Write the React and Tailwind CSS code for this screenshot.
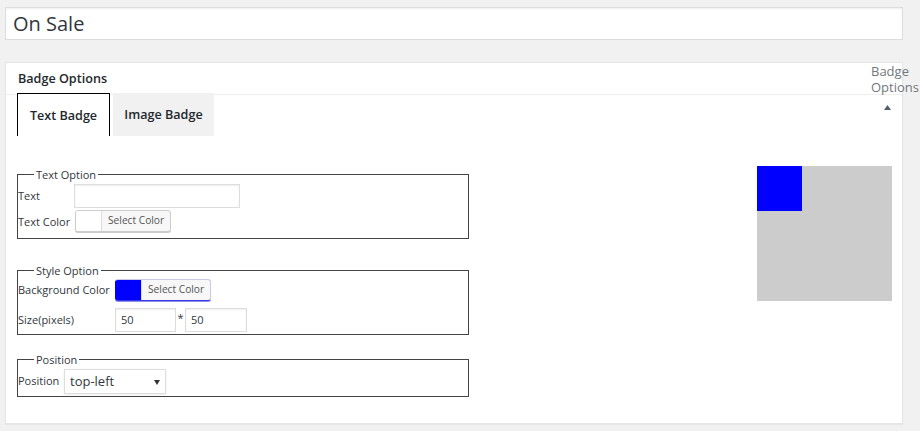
import React from "react";

function ColorButton({ focused }) {
  return (
    <div
      className={
        "flex h-[22px] rounded-[3px] border bg-[#f7f7f7] overflow-hidden " +
        (focused
          ? "border-[#c9c9e8] border-l-0 border-b-[#3a3ae6] shadow-[0_1px_0_#8d8df0]"
          : "border-[#cccccc] shadow-[0_1px_0_#cccccc]")
      }
    >
      <span
        className={
          focused
            ? "w-[27px] h-full bg-[#0000ff] border-r border-[#dddddd]"
            : "w-[26px] h-full bg-white border-r border-[#dddddd]"
        }
      />
      <span className="flex items-center whitespace-nowrap px-[6px] text-[10.2px] text-[#555555]">
        Select Color
      </span>
    </div>
  );
}

function Input({ w, value }) {
  return (
    <div
      className={
        "h-[24px] border border-[#dddddd] bg-white shadow-[inset_0_1px_2px_rgba(0,0,0,0.07)] flex items-center pl-[5px] text-[11px] text-[#32373c] " +
        w
      }
    >
      {value}
    </div>
  );
}

export default function App() {
  return (
    <div className="w-[920px] h-[431px] bg-[#f1f1f1] overflow-hidden pt-[7px] pl-[5px] font-['Open_Sans','Noto_Sans',sans-serif] text-[#32373c]">
      <div className="w-[898px] h-[33px] border border-[#dddddd] bg-white flex items-center pl-[7px] text-[20px] text-[#32373c] shadow-[inset_0_1px_2px_rgba(0,0,0,0.07)]">
        On Sale
      </div>

      <div className="relative mt-[22px] w-[898px] h-[362px] border border-[#e5e5e5] bg-white shadow-[0_1px_1px_rgba(0,0,0,0.04)]">
        <div className="h-[32px] pt-[2px] border-b border-[#eeeeee] flex items-center pl-[12px] text-[12.6px] font-semibold text-[#23282d]">
          Badge Options
        </div>
        <div className="absolute left-[865px] top-0 w-[38px] text-[13px] leading-[16px] text-[#72777c]">
          Badge Options
        </div>
        <svg
          className="absolute left-[878px] top-[42px]"
          width="7"
          height="5"
          viewBox="0 0 7 5"
        >
          <path d="M3.5 0 L7 5 L0 5 Z" fill="#555d66" />
        </svg>

        <div className="flex ml-[11px] -mt-[2px] gap-[3px]">
          <div className="w-[93px] h-[43px] pt-[2px] border border-b-0 border-black bg-white flex items-center justify-center text-[12.6px] font-semibold text-[#23282d]">
            Text Badge
          </div>
          <div className="w-[101px] h-[43px] pt-[2px] bg-[#f1f1f1] flex items-center justify-center text-[12.6px] font-semibold text-[#23282d]">
            Image Badge
          </div>
        </div>

        <div className="flex justify-between">
          <div className="pl-[11px] pt-[31px]">
            <fieldset className="w-[452px] border border-[#444444] pb-[5px]">
              <legend className="ml-[16px] px-[2px] text-[11px] leading-[15px]">
                Text Option
              </legend>
              <div className="flex items-center h-[26px] mt-[1px] text-[11px]">
                <span className="w-[56px]">Text</span>
                <Input w="w-[166px]" value="" />
              </div>
              <div className="flex items-center h-[24px] text-[11px]">
                <span className="w-[57px] pt-[3px]">Text Color</span>
                <ColorButton />
              </div>
            </fieldset>

            <fieldset className="mt-[24px] w-[452px] border border-[#444444] pb-[1px]">
              <legend className="ml-[16px] px-[2px] text-[11px] leading-[15px]">
                Style Option
              </legend>
              <div className="flex items-center h-[23px] text-[11px]">
                <span className="w-[97px] pt-[1px]">Background Color</span>
                <ColorButton focused />
              </div>
              <div className="flex items-center h-[26px] mt-[6px] text-[11px]">
                <span className="w-[97px]">Size(pixels)</span>
                <Input w="w-[61px]" value="50" />
                <span className="w-[9px] text-center self-start mt-[3px]">*</span>
                <Input w="w-[62px]" value="50" />
              </div>
            </fieldset>

            <fieldset className="mt-[17px] w-[452px] border border-[#444444]">
              <legend className="ml-[16px] px-[2px] text-[11px] leading-[15px]">
                Position
              </legend>
              <div className="flex items-center h-[29px] text-[11px]">
                <span className="w-[46px]">Position</span>
                <div className="relative w-[102px] h-[25px] border border-[#dddddd] bg-white shadow-[0_1px_2px_rgba(0,0,0,0.07)] flex items-center pl-[5px] text-[13px] text-[#32373c]">
                  top-left
                  <svg
                    className="absolute left-[89px] top-[10px]"
                    width="6"
                    height="5"
                    viewBox="0 0 6 5"
                  >
                    <path d="M0 0 L6 0 L3 5 Z" fill="#333333" />
                  </svg>
                </div>
              </div>
            </fieldset>
          </div>

          <div className="mt-[30px] mr-[10px] w-[135px] h-[135px] bg-[#cccccc]">
            <div className="w-[45px] h-[45px] bg-[#0000ff]" />
          </div>
        </div>
      </div>
    </div>
  );
}
